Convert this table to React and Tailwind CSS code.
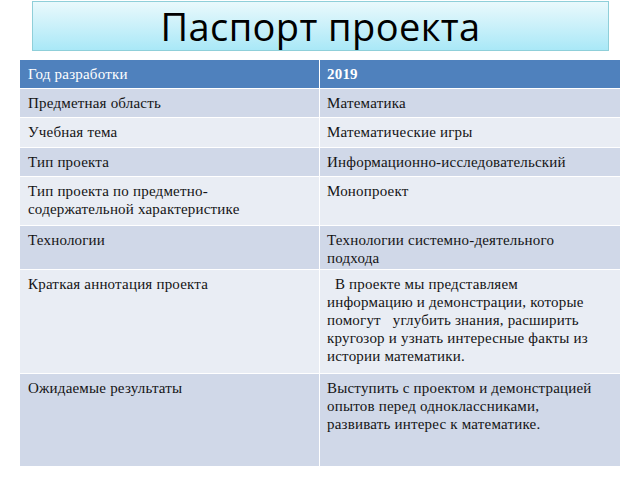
import React from 'react';

const rows = [
  { left: 'Предметная область', right: 'Математика', h: 'h-[29px]', dark: true },
  { left: 'Учебная тема', right: 'Математические игры', h: 'h-[30px]', dark: false },
  { left: 'Тип проекта', right: 'Информационно-исследовательский', h: 'h-[29px]', dark: true },
  { left: 'Тип проекта по предметно-содержательной характеристике', right: 'Монопроект', h: 'h-[49px]', dark: false },
  { left: 'Технологии', right: 'Технологии системно-деятельного подхода', h: 'h-[44px]', dark: true },
  {
    left: 'Краткая аннотация проекта',
    right: '\u00a0 В проекте мы представляем информацию и демонстрации, которые помогут \u00a0 углубить знания, расширить кругозор и узнать интересные факты из истории математики.',
    h: 'h-[104px]',
    dark: false,
  },
  { left: 'Ожидаемые результаты', right: 'Выступить с проектом и демонстрацией опытов перед одноклассниками, развивать интерес к математике.', h: 'h-[93px]', dark: true },
];

export default function App() {
  return (
    <div className="w-[640px] h-[480px] bg-white overflow-hidden flex flex-col items-start">
      <div className="ml-[32px] mt-px w-[577px] h-[50px] border border-[#8fcfd9] bg-gradient-to-b from-[#e9f9fc] to-[#a9e8f7] flex items-center justify-center">
        <h1 className="text-[38px] leading-[48px] text-black font-['Open_Sans',sans-serif] tracking-[0.4px]">Паспорт проекта</h1>
      </div>

      <div className="ml-[20px] mt-[9px] w-[600px] flex flex-col font-['Liberation_Serif',serif] text-[15px] leading-[18px] tracking-[0.2px] text-[#141414]">
        <div className="grid grid-cols-[300px_300px] h-[28px] bg-[#4f81bd] text-white">
          <div className="pl-[8px] pt-[5px] border-r border-white">Год разработки</div>
          <div className="pl-[7px] pt-[5px] font-bold">2019</div>
        </div>
        {rows.map((r, i) => (
          <div
            key={i}
            className={`grid grid-cols-[300px_300px] border-t border-white ${r.h} ${r.dark ? 'bg-[#d0d8e8]' : 'bg-[#e9edf4]'}`}
          >
            <div className="pl-[8px] pr-[40px] pt-[5px] border-r border-white">{r.left}</div>
            <div className="pl-[7px] pr-[18px] pt-[5px]">{r.right}</div>
          </div>
        ))}
      </div>
    </div>
  );
}
